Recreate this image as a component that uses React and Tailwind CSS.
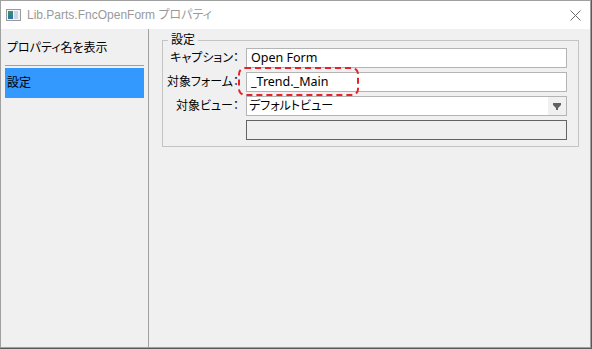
export default function App() {
  const font = { fontFamily: '"Noto Sans", "Noto Sans CJK JP", sans-serif' };
  return (
    <div className="w-[592px] h-[349px] bg-[#5a5a5a] relative overflow-hidden [font-feature-settings:'palt']" style={font}>
      <div className="w-[591px] h-[348px] border border-[#a0a0a0] bg-[#f0f0f0] flex flex-col">
        {/* title bar */}
        <div className="h-[28px] bg-white flex items-center shrink-0">
          <div className="ml-[5px] w-[15px] h-[12px] border border-[#9a9a9a] bg-[#f4f4f4] flex p-[1px] gap-[1px]">
            <div className="w-[5px] h-full bg-gradient-to-b from-[#3f8f5f] to-[#2f6fb0]" />
            <div className="w-[4px] h-full bg-[#c8d8e8]" />
          </div>
          <div
            className="ml-[6px] text-[12px] leading-[14px] text-[#9a9a9a] whitespace-nowrap"
            style={{ fontFamily: '"Liberation Sans", "Noto Sans CJK JP", sans-serif' }}
          >
            Lib.Parts.FncOpenForm プロパティ
          </div>
          <div className="ml-auto mr-[9px]">
            <svg width="11" height="11" viewBox="0 0 11 11">
              <path d="M0.5 0.5 L10.5 10.5 M10.5 0.5 L0.5 10.5" stroke="#6a6a6a" strokeWidth="1" fill="none" />
            </svg>
          </div>
        </div>
        {/* body */}
        <div className="flex flex-1 min-h-0">
          {/* left panel */}
          <div className="w-[148px] border-r border-[#a0a0a0] flex flex-col px-[4px] shrink-0">
            <div className="mt-[4px] h-[30px] flex items-center pl-[2px] text-[12px] text-black whitespace-nowrap">
              プロパティ名を表示
            </div>
            <div className="mt-[2px] h-[1px] bg-[#a0a0a0]" />
            <div className="mt-[2px] h-[30px] bg-[#3399ff] flex items-center pl-[2px] text-[12px] text-black">
              設定
            </div>
          </div>
          {/* right panel */}
          <div className="flex-1 pl-[13px] pt-[4px]">
            <fieldset className="w-[417px] h-[114px] border border-[#c4c4c4] px-0 pb-0 pt-0">
              <legend className="ml-[5px] px-[3px] text-[12px] leading-[14px] text-black">設定</legend>
              <div className="flex flex-col gap-[4px] pt-[1px]">
                <div className="flex items-center h-[20px]">
                  <div className="w-[78px] pr-[2px] text-right text-[12px] text-black whitespace-nowrap">キャプション：</div>
                  <div className="ml-[5px] w-[321px] h-[20px] border border-[#b4b4b4] bg-white flex items-center pl-[4px] text-[12.5px] text-black">
                    Open Form
                  </div>
                </div>
                <div className="flex items-center h-[20px]">
                  <div className="w-[78px] pr-[2px] text-right text-[12px] text-black whitespace-nowrap">対象フォーム：</div>
                  <div className="ml-[5px] w-[321px] h-[20px] border border-[#b4b4b4] bg-white flex items-center pl-[4px] text-[12.5px] text-black">
                    _Trend._Main
                  </div>
                </div>
                <div className="flex items-center h-[20px]">
                  <div className="w-[78px] pr-[2px] text-right text-[12px] text-black whitespace-nowrap">対象ビュー：</div>
                  <div className="ml-[5px] w-[321px] h-[20px] border border-[#b4b4b4] bg-white flex items-center text-[12px] text-black">
                    <div className="pl-[2px] flex-1">デフォルトビュー</div>
                    <div className="w-[18px] h-full bg-[#f0f0f0] flex items-center justify-center">
                      <svg width="8" height="7" viewBox="0 0 8 7">
                        <path d="M0 0H8V2L5 5V7H3V5L0 2Z" fill="#606060" />
                      </svg>
                    </div>
                  </div>
                </div>
                <div className="flex items-center h-[20px]">
                  <div className="w-[78px]" />
                  <div className="ml-[5px] w-[321px] h-[20px] border border-[#646464] bg-[#f0f0f0]" />
                </div>
              </div>
            </fieldset>
          </div>
        </div>
      </div>
      {/* red annotation */}
      <div className="absolute left-[238px] top-[67px] w-[121px] h-[29px] border-2 border-dashed border-[#e8202a] rounded-[7px]" />
    </div>
  );
}
